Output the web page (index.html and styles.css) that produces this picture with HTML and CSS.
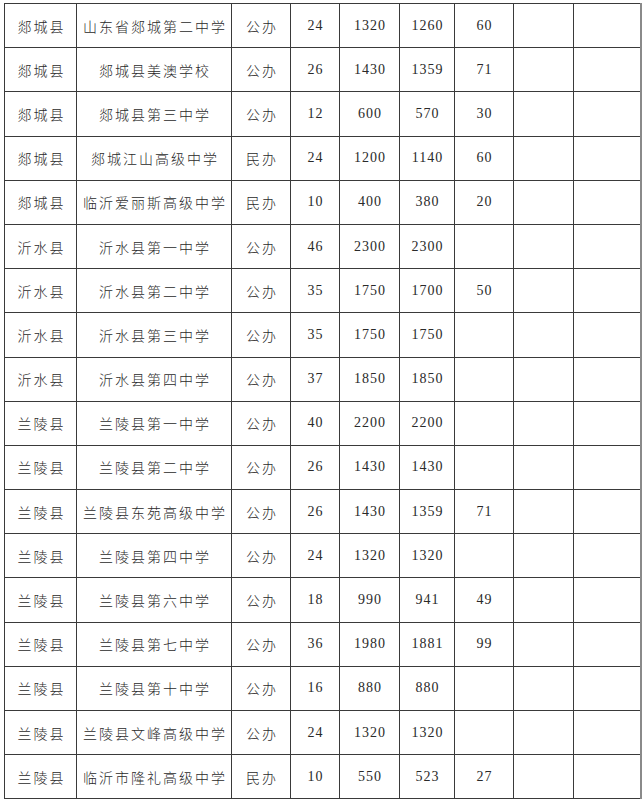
FILE: index.html
```html
<!DOCTYPE html>
<html lang="zh">
<head>
<meta charset="utf-8">
<link rel="stylesheet" href="styles.css">
</head>
<body>
<table class="grid">
  <colgroup>
    <col class="c1"><col class="c2"><col class="c3"><col class="c4"><col class="c5"><col class="c6"><col class="c7"><col class="c8"><col class="c9">
  </colgroup>
  <tbody>
    <tr><td>郯城县</td><td>山东省郯城第二中学</td><td>公办</td><td class="n">24</td><td class="n">1320</td><td class="n">1260</td><td class="n">60</td><td></td><td></td></tr>
    <tr><td>郯城县</td><td>郯城县美澳学校</td><td>公办</td><td class="n">26</td><td class="n">1430</td><td class="n">1359</td><td class="n">71</td><td></td><td></td></tr>
    <tr><td>郯城县</td><td>郯城县第三中学</td><td>公办</td><td class="n">12</td><td class="n">600</td><td class="n">570</td><td class="n">30</td><td></td><td></td></tr>
    <tr><td>郯城县</td><td>郯城江山高级中学</td><td>民办</td><td class="n">24</td><td class="n">1200</td><td class="n">1140</td><td class="n">60</td><td></td><td></td></tr>
    <tr><td>郯城县</td><td>临沂爱丽斯高级中学</td><td>民办</td><td class="n">10</td><td class="n">400</td><td class="n">380</td><td class="n">20</td><td></td><td></td></tr>
    <tr><td>沂水县</td><td>沂水县第一中学</td><td>公办</td><td class="n">46</td><td class="n">2300</td><td class="n">2300</td><td class="n"></td><td></td><td></td></tr>
    <tr><td>沂水县</td><td>沂水县第二中学</td><td>公办</td><td class="n">35</td><td class="n">1750</td><td class="n">1700</td><td class="n">50</td><td></td><td></td></tr>
    <tr><td>沂水县</td><td>沂水县第三中学</td><td>公办</td><td class="n">35</td><td class="n">1750</td><td class="n">1750</td><td class="n"></td><td></td><td></td></tr>
    <tr><td>沂水县</td><td>沂水县第四中学</td><td>公办</td><td class="n">37</td><td class="n">1850</td><td class="n">1850</td><td class="n"></td><td></td><td></td></tr>
    <tr><td>兰陵县</td><td>兰陵县第一中学</td><td>公办</td><td class="n">40</td><td class="n">2200</td><td class="n">2200</td><td class="n"></td><td></td><td></td></tr>
    <tr><td>兰陵县</td><td>兰陵县第二中学</td><td>公办</td><td class="n">26</td><td class="n">1430</td><td class="n">1430</td><td class="n"></td><td></td><td></td></tr>
    <tr><td>兰陵县</td><td>兰陵县东苑高级中学</td><td>公办</td><td class="n">26</td><td class="n">1430</td><td class="n">1359</td><td class="n">71</td><td></td><td></td></tr>
    <tr><td>兰陵县</td><td>兰陵县第四中学</td><td>公办</td><td class="n">24</td><td class="n">1320</td><td class="n">1320</td><td class="n"></td><td></td><td></td></tr>
    <tr><td>兰陵县</td><td>兰陵县第六中学</td><td>公办</td><td class="n">18</td><td class="n">990</td><td class="n">941</td><td class="n">49</td><td></td><td></td></tr>
    <tr><td>兰陵县</td><td>兰陵县第七中学</td><td>公办</td><td class="n">36</td><td class="n">1980</td><td class="n">1881</td><td class="n">99</td><td></td><td></td></tr>
    <tr><td>兰陵县</td><td>兰陵县第十中学</td><td>公办</td><td class="n">16</td><td class="n">880</td><td class="n">880</td><td class="n"></td><td></td><td></td></tr>
    <tr><td>兰陵县</td><td>兰陵县文峰高级中学</td><td>公办</td><td class="n">24</td><td class="n">1320</td><td class="n">1320</td><td class="n"></td><td></td><td></td></tr>
    <tr><td>兰陵县</td><td>临沂市隆礼高级中学</td><td>民办</td><td class="n">10</td><td class="n">550</td><td class="n">523</td><td class="n">27</td><td></td><td></td></tr>
  </tbody>
</table>
</body>
</html>
```
FILE: styles.css
```css
html, body {
  margin: 0;
  background: #ffffff;
}
body {
  padding: 3px 0 0 4px;
}
.grid {
  border-collapse: collapse;
  table-layout: fixed;
  width: 636px;
  font-family: "Liberation Serif", "Noto Sans CJK SC", serif;
  font-size: 14px;
  color: #2a2a2a;
  border-right: 2px solid #8a8a8a;
}
.c1 { width: 72px; }
.c2 { width: 155px; }
.c3 { width: 59px; }
.c4 { width: 49px; }
.c5 { width: 60px; }
.c6 { width: 55px; }
.c7 { width: 59px; }
.c8 { width: 60px; }
.c9 { width: 67px; }
.grid tr {
  height: 44.2px;
}
.grid td {
  border: 1px solid #3a3a3a;
  padding: 0;
  text-align: center;
  vertical-align: middle;
  font-family: "Noto Sans CJK SC", sans-serif;
  font-weight: 300;
  letter-spacing: 2px;
  text-indent: 2px;
  white-space: nowrap;
}
.grid td.n {
  font-family: "Liberation Serif", serif;
  font-weight: 400;
  letter-spacing: 1px;
  text-indent: 1px;
}
```
